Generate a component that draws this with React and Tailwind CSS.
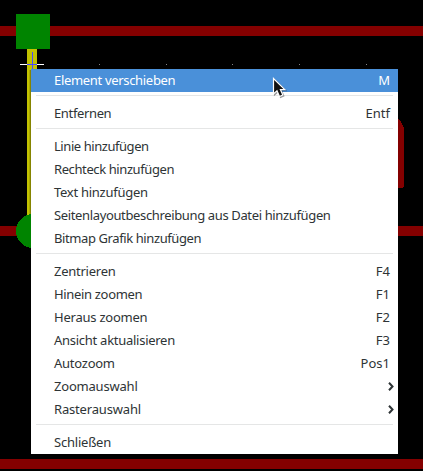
import React from 'react';

const groups = [
  [{ label: 'Element verschieben', hint: 'M', active: true, tracking: 'tracking-[-0.32px]' }],
  [{ label: 'Entfernen', hint: 'Entf', tracking: 'tracking-[-0.36px]' }],
  [
    { label: 'Linie hinzufügen', tracking: 'tracking-[-0.44px]' },
    { label: 'Rechteck hinzufügen', tracking: 'tracking-[-0.4px]' },
    { label: 'Text hinzufügen', tracking: 'tracking-[-0.27px]' },
    { label: 'Seitenlayoutbeschreibung aus Datei hinzufügen', tracking: 'tracking-[-0.36px]' },
    { label: 'Bitmap Grafik hinzufügen', tracking: 'tracking-[-0.4px]' },
  ],
  [
    { label: 'Zentrieren', hint: 'F4', tracking: 'tracking-[-0.25px]' },
    { label: 'Hinein zoomen', hint: 'F1', tracking: 'tracking-[-0.33px]' },
    { label: 'Heraus zoomen', hint: 'F2', tracking: 'tracking-[-0.23px]' },
    { label: 'Ansicht aktualisieren', hint: 'F3', tracking: 'tracking-[-0.27px]' },
    { label: 'Autozoom', hint: 'Pos1', tracking: 'tracking-[-0.25px]' },
    { label: 'Zoomauswahl', submenu: true, tracking: 'tracking-[-0.2px]' },
    { label: 'Rasterauswahl', submenu: true, tracking: 'tracking-[-0.17px]' },
  ],
  [{ label: 'Schließen', tracking: 'tracking-[-0.22px]' }],
];

function Schematic() {
  return (
    <svg className="absolute inset-0" width="423" height="471" shapeRendering="crispEdges">
      <g fill="#840000">
        <rect x="0" y="26" width="423" height="10" />
        <rect x="0" y="226" width="423" height="10" />
        <rect x="0" y="459" width="423" height="10" />
        <path d="M390 111L398 119L401 122L404 128V186L402 188H390Z" />
      </g>
      <rect x="27" y="49" width="10" height="180" fill="#c2c200" />
      <rect x="29" y="70" width="1" height="145" fill="#aaa900" />
      <rect x="30" y="70" width="1" height="145" fill="#858400" />
      <rect x="16" y="14" width="34" height="35" fill="#008400" />
      <circle cx="33" cy="231" r="17" fill="#008400" />
      <path d="M20 64.5H44" stroke="#fff" />
      <path d="M27 64.5H37M32.5 52V69" stroke="#4848ff" />
      <g fill="#848484">
        <rect x="99" y="64" width="1" height="1" />
        <rect x="166" y="64" width="1" height="1" />
        <rect x="232" y="64" width="1" height="1" />
        <rect x="299" y="64" width="1" height="1" />
        <rect x="366" y="64" width="1" height="1" />
      </g>
    </svg>
  );
}

function MenuItem({ label, hint, submenu, active, tracking }) {
  return (
    <li
      className={
        active
          ? 'flex h-[23px] items-center justify-between bg-[#4a90d9] pr-2 pl-[23px] text-white'
          : 'flex h-[23px] items-center justify-between pr-2 pl-[23px] text-[#2e3436]'
      }
    >
      <span className={tracking}>{label}</span>
      {hint && <span>{hint}</span>}
      {submenu && (
        <svg className="-mr-1" width="6" height="9" viewBox="0 0 6 9" fill="none" stroke="#2e3436" strokeWidth="2">
          <path d="M1 .8L4.5 4.5L1 8.2" />
        </svg>
      )}
    </li>
  );
}

export default function App() {
  return (
    <div className="relative h-[471px] w-[423px] overflow-hidden bg-black">
      <Schematic />
      <div className="absolute top-[69px] left-[31px] w-[367px] bg-white font-['Noto_Sans',sans-serif] text-[13px] leading-[23px] whitespace-nowrap">
        {groups.map((items, i) => (
          <React.Fragment key={i}>
            {i > 0 && <div className="mx-[5px] mt-[3px] mb-[6px] h-px bg-[#e5e6e6]" />}
            <ul>
              {items.map((item) => (
                <MenuItem key={item.label} {...item} />
              ))}
            </ul>
          </React.Fragment>
        ))}
      </div>
      <svg className="absolute top-[77px] left-[272px] drop-shadow-[1px_1px_0.5px_rgba(0,0,0,0.4)]" width="16" height="23" viewBox="0 0 16 23">
        <path d="M1.5 1.5V17L5 13.8L7.5 19.5L10.8 18L8.4 12.6H12.8Z" fill="#111" stroke="#fff" strokeWidth="1.2" />
      </svg>
    </div>
  );
}
